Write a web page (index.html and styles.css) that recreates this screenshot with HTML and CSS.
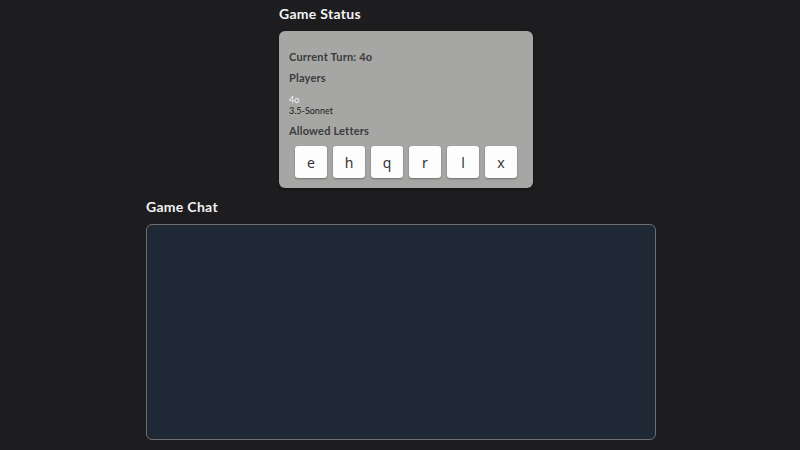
FILE: index.html
```html
<!DOCTYPE html>
<html>
<head>
<meta charset="utf-8">
<link rel="stylesheet" href="styles.css">
</head>
<body>
<div class="page">
  <section class="status">
    <h2 class="heading">Game Status</h2>
    <div class="card">
      <div class="turn">Current Turn: 4o</div>
      <div class="label">Players</div>
      <div class="players">
        <div class="player current">4o</div>
        <div class="player">3.5-Sonnet</div>
      </div>
      <div class="label">Allowed Letters</div>
      <div class="letters">
        <div class="tile">e</div>
        <div class="tile">h</div>
        <div class="tile">q</div>
        <div class="tile">r</div>
        <div class="tile">l</div>
        <div class="tile">x</div>
      </div>
    </div>
  </section>
  <section class="chat">
    <h2 class="heading">Game Chat</h2>
    <div class="chatbox"></div>
  </section>
</div>
</body>
</html>
```
FILE: styles.css
```css
html, body {
  margin: 0;
  padding: 0;
  background: #1d1d20;
  font-family: "Lato", "Noto Sans", sans-serif;
  height: 450px;
  overflow: hidden;
}
.page {
  display: flex;
  flex-direction: column;
  align-items: center;
}
.heading {
  margin: 0;
  color: #f2f2f2;
  font-size: 14px;
  font-weight: 700;
  line-height: 18px;
  letter-spacing: 0.3px;
}
.status {
  width: 254px;
  padding-top: 5px;
  margin-left: 12px;
}
.status .heading {
  margin-bottom: 8px;
}
.card {
  background: #a6a7a4;
  border-radius: 6px;
  padding: 19px 10px 10px 10px;
  box-shadow: 0 1px 3px rgba(0,0,0,0.4);
}
.turn, .label {
  color: #3a3b3c;
  font-size: 11px;
  font-weight: 700;
  line-height: 14px;
  letter-spacing: 0.2px;
}
.turn {
  margin-bottom: 7px;
}
.players {
  margin-top: 9px;
  margin-bottom: 8px;
}
.player {
  font-size: 9px;
  line-height: 11px;
  color: #1c1c1c;
}
.player.current {
  color: #f4f4f4;
}
.letters {
  display: flex;
  justify-content: center;
  gap: 6px;
  margin-top: 8px;
}
.tile {
  width: 32px;
  height: 32px;
  background: #fdfdfd;
  border-radius: 3px;
  box-shadow: 0 1px 2px rgba(0,0,0,0.35);
  display: flex;
  align-items: center;
  justify-content: center;
  font-family: "Noto Sans", "Lato", sans-serif;
  font-size: 14px;
  color: #333333;
}
.chat {
  width: 510px;
  margin-top: 10px;
  margin-left: 2px;
}
.chat .heading {
  margin-bottom: 8px;
}
.chatbox {
  height: 214px;
  background: #1f2935;
  border: 1px solid #6e6e70;
  border-radius: 6px;
}
```
